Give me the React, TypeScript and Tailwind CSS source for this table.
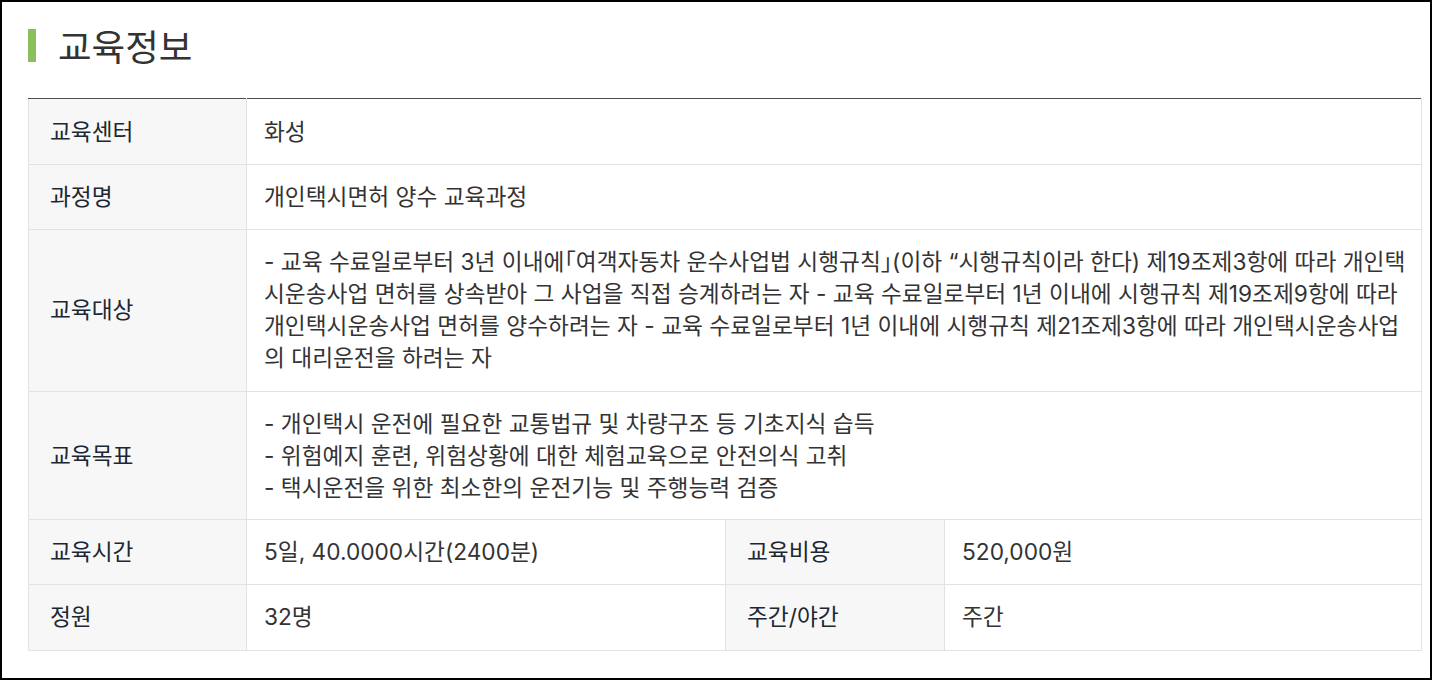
const FONT = "font-['Inter','Noto_Sans_CJK_KR',sans-serif]";

function Label({ children }: { children: React.ReactNode }) {
  return (
    <th className="border border-[#e2e2e2] bg-[#f7f7f7] py-4 pl-[21px] pr-4 text-left align-middle font-normal text-[#1c2733]">
      {children}
    </th>
  );
}

function Value({ children, span }: { children: React.ReactNode; span?: number }) {
  return (
    <td
      colSpan={span}
      className="border border-[#e2e2e2] py-4 pl-[17px] pr-3 align-middle text-[#333]"
    >
      {children}
    </td>
  );
}

export default function App() {
  return (
    <div className={`${FONT} h-[680px] w-[1432px] border-2 border-black bg-white pl-[26px] pr-[8px] pt-[27px]`}>
      <div className="flex h-[33px] items-center">
        <div className="h-[33px] w-2 bg-[#8bbf5a]" />
        <h2 className="ml-[22px] pt-[6px] text-[36.5px] leading-none text-[#333]">교육정보</h2>
      </div>

      <table className="mt-[36px] w-full table-fixed border-collapse text-[22.7px] leading-[32px]">
        <colgroup>
          <col className="w-[218px]" />
          <col className="w-[479px]" />
          <col className="w-[219px]" />
          <col />
        </colgroup>
        <tbody>
          <tr className="*:border-t-[#4d4d4d]! *:pt-[17px]!">
            <Label>교육센터</Label>
            <Value span={3}>화성</Value>
          </tr>
          <tr>
            <Label>과정명</Label>
            <Value span={3}>개인택시면허 양수 교육과정</Value>
          </tr>
          <tr className="*:pb-[17px]!">
            <Label>교육대상</Label>
            <Value span={3}>
              - 교육 수료일로부터 3년 이내에｢여객자동차 운수사업법 시행규칙｣(이하 “시행규칙이라 한다) 제19조제3항에 따라 개인택시운송사업 면허를 상속받아 그 사업을 직접 승계하려는 자 - 교육 수료일로부터 1년 이내에 시행규칙 제19조제9항에 따라 개인택시운송사업 면허를 양수하려는 자 - 교육 수료일로부터 1년 이내에 시행규칙 제21조제3항에 따라 개인택시운송사업의 대리운전을 하려는 자
            </Value>
          </tr>
          <tr className="*:pb-[15px]!">
            <Label>교육목표</Label>
            <Value span={3}>
              - 개인택시 운전에 필요한 교통법규 및 차량구조 등 기초지식 습득
              <br />
              - 위험예지 훈련, 위험상황에 대한 체험교육으로 안전의식 고취
              <br />
              - 택시운전을 위한 최소한의 운전기능 및 주행능력 검증
            </Value>
          </tr>
          <tr>
            <Label>교육시간</Label>
            <Value>5일, 40.0000시간(2400분)</Value>
            <Label>교육비용</Label>
            <Value>520,000원</Value>
          </tr>
          <tr className="*:pb-[17px]!">
            <Label>정원</Label>
            <Value>32명</Value>
            <Label>주간/야간</Label>
            <Value>주간</Value>
          </tr>
        </tbody>
      </table>
    </div>
  );
}
